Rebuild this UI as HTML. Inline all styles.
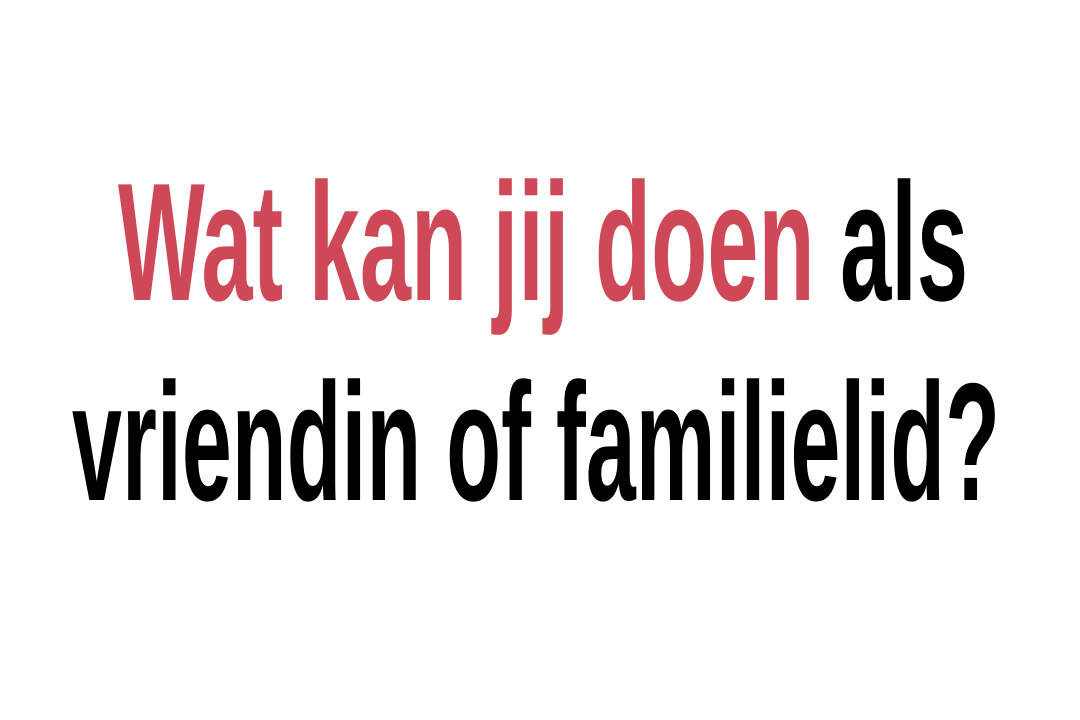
<!DOCTYPE html>
<html><head><meta charset="utf-8"><style>
html,body{margin:0;padding:0;background:#fff;width:1080px;height:720px;overflow:hidden}
svg{display:block}
text{font-family:"Liberation Sans Narrow","Liberation Sans",sans-serif;font-weight:bold;font-size:168px}
</style></head><body>
<svg width="1080" height="720" viewBox="0 0 1080 720">
<text x="118" y="300" textLength="850" lengthAdjust="spacingAndGlyphs"><tspan fill="#cf4858">Wat kan jij doen </tspan><tspan fill="#000">als</tspan></text>
<text x="72" y="500" textLength="928" lengthAdjust="spacingAndGlyphs" fill="#000">vriendin of familielid?</text>
</svg>
</body></html>
